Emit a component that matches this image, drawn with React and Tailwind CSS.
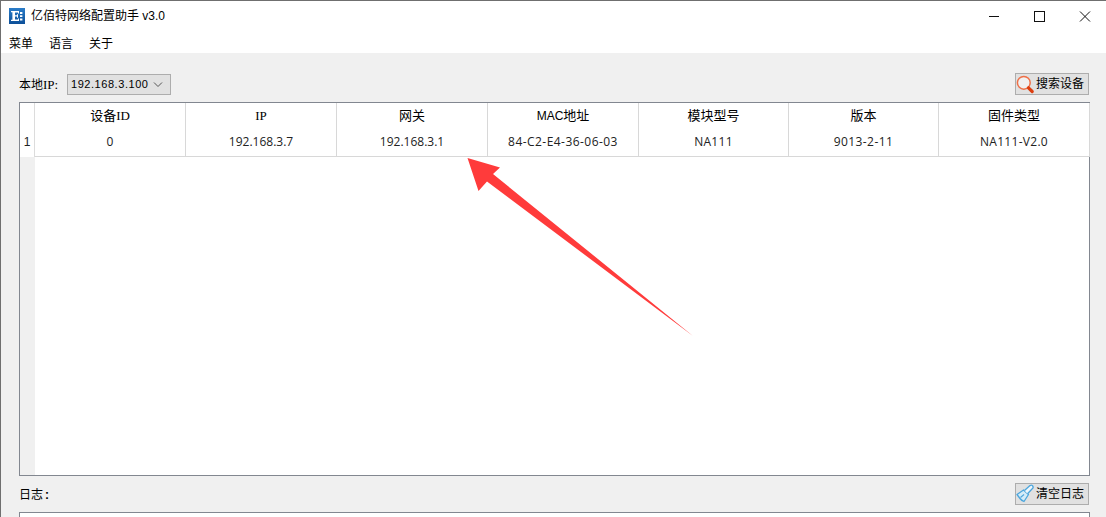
const CN = "font-['Liberation_Sans','Noto_Sans_CJK_SC',sans-serif]";
const COLS = [
  [<>设备<span className="font-['Liberation_Serif'] text-[13px]">ID</span></>, "0", "w-[151px]", ""],
  [<span className="font-['Liberation_Serif'] text-[13px]">IP</span>, "192.168.3.7", "w-[151px]", ""],
  ["网关", "192.168.3.1", "w-[151px]", ""],
  [<><span className="text-[12px]">MAC</span>地址</>, "84-C2-E4-36-06-03", "w-[151px]", "tracking-[0.45px]"],
  ["模块型号", "NA111", "w-[150px]", "tracking-[0.3px]"],
  ["版本", "9013-2-11", "w-[150px]", "tracking-[0.4px]"],
  ["固件类型", "NA111-V2.0", "w-[151px]", "tracking-[0.3px]"],
];

function Logo() {
  return (
    <svg width="16" height="16" viewBox="0 0 16 16" className="shrink-0">
      <defs>
        <linearGradient id="lg" x1="0" y1="0" x2="0" y2="1">
          <stop offset="0" stopColor="#2a7cc8" />
          <stop offset="1" stopColor="#0c4f98" />
        </linearGradient>
      </defs>
      <rect width="16" height="16" fill="url(#lg)" />
      <path d="M2 3h8v2.6H9V4.4H6v2.8h2V6.2h1v3.6H8V8.6H6v3h3v-1.2h1V13H2v-1.2h1.4V4.2H2z" fill="#fff" />
      <path d="M11 4h2.4v2H11zM11 7.2h2.4v1.8H11zM11 10.4h2.4v2H11z" fill="#fff" />
    </svg>
  );
}

function SearchIcon() {
  return (
    <svg width="19" height="19" viewBox="0 0 19 19" className="shrink-0">
      <circle cx="7.8" cy="7.8" r="6.4" fill="#fff" fillOpacity="0.55" stroke="#ee7048" strokeWidth="1.5" />
      <path d="M12.5 12.8 L16.2 16.5" stroke="#dd3f10" strokeWidth="3.2" strokeLinecap="round" />
    </svg>
  );
}

function BrushIcon() {
  return (
    <svg width="19" height="19" viewBox="0 0 19 19" className="shrink-0">
      <path d="M1 10.5 L7.5 6 L12.5 10.5 L8 17.5 Q5.5 16.5 4 14.5 Q2.5 12.5 1 10.5 Z" fill="#d4ecf8" stroke="#4da6dc" strokeWidth="1.3" strokeLinejoin="round" />
      <path d="M8.5 6.5 L14 1.6 Q15.5 .6 16.5 1.6 L17 2.6 Q17.6 3.8 16 5 L11.5 9.8" fill="#eef7fc" stroke="#4da6dc" strokeWidth="1.3" strokeLinejoin="round" />
      <path d="M4.5 13.5 L8 10.5" stroke="#4da6dc" strokeWidth="1.1" />
    </svg>
  );
}

function Button({ icon, label }) {
  return (
    <div className="mr-px flex h-[22px] w-[74px] items-center justify-between whitespace-nowrap border border-[#adadad] bg-[#e1e1e1] pr-1 text-[12px] text-black">
      {icon}
      <span>{label}</span>
    </div>
  );
}

export default function App() {
  return (
    <div className={`${CN} relative flex h-[517px] w-[1106px] flex-col overflow-hidden border-l border-t border-[#6f6f6f] bg-[#f0f0f0] text-black`}>
      <header className="flex h-[29px] shrink-0 items-center bg-white pl-2 pt-[1px]">
        <Logo />
        <span className="ml-[6px] flex-1 text-[12px]">亿佰特网络配置助手 v3.0</span>
        <svg width="160" height="29" viewBox="0 0 160 29" className="shrink-0" fill="none" stroke="#111" strokeWidth="1">
          <path d="M43 14.5h10" />
          <rect x="88.5" y="9.5" width="10" height="10" />
          <path d="M134 9.5l10 10M144 9.5l-10 10" />
        </svg>
      </header>
      <nav className="flex h-[23px] shrink-0 items-center gap-4 bg-white pl-2 pt-1 text-[12px]">
        <span>菜单</span>
        <span>语言</span>
        <span>关于</span>
      </nav>
      <main className="flex flex-1 flex-col pl-[18px] pr-4">
        <div className="flex h-[49px] shrink-0 items-end justify-between pb-[6px]">
          <div className="mb-px flex items-center whitespace-nowrap text-[12px]">
            <span className="w-[48px]">本地<span className="font-['Liberation_Serif'] text-[13px]">IP:</span></span>
            <div className="flex h-[21px] w-[104px] items-center justify-between border border-[#adadad] bg-[#e1e1e1] pl-[3px] pr-[7px]">
              <span className="text-[11px] tracking-[0.55px] font-['Liberation_Sans',sans-serif]">192.168.3.100</span>
              <svg width="10" height="6" viewBox="0 0 10 6" fill="none" stroke="#555" strokeWidth="1"><path d="M1 .5l4 4 4-4" /></svg>
            </div>
          </div>
          <div className="mb-[1px]"><Button icon={<SearchIcon />} label="搜索设备" /></div>
        </div>
        <section className="flex h-[374px] w-[1071px] shrink-0 border border-[#828790] bg-white">
          <div className="w-[15px] shrink-0 bg-[#f0f0f0]">
            <div className="flex h-[54px] items-end justify-center border-r border-[#dcdcdc] bg-white pb-[6px] text-[12px] text-[#222]">1</div>
          </div>
          <div className="flex h-[54px] flex-1 border-b border-[#d8d8d8]">
            {COLS.map(([h, v, w, t], i) => (
              <div key={i} className={`${w} flex shrink-0 flex-col items-center border-r border-[#d8d8d8]`}>
                <div className="flex h-[26px] items-center text-[13px] text-black">{h}</div>
                <div className={`${t} flex flex-1 items-center pb-px text-[12px] text-[#222] font-['Open_Sans',sans-serif]`}>{v}</div>
              </div>
            ))}
          </div>
        </section>
        <div className="flex h-[36px] shrink-0 items-center justify-between pb-[1px]">
          <span className="pt-[2px] text-[12px]">日志<span className="ml-[2px] font-bold">:</span></span>
          <Button icon={<BrushIcon />} label="清空日志" />
        </div>
        <div className="h-6 w-[1071px] border border-[#828790] bg-white" />
      </main>
      <svg width="240" height="190" viewBox="0 0 240 190" className="absolute left-[465px] top-[155px]">
        <path d="M1.5 2 L34 11.5 L27 18 L227 180 L21 25.5 L12.5 35 Z" fill="#ff3b3b" />
      </svg>
    </div>
  );
}
